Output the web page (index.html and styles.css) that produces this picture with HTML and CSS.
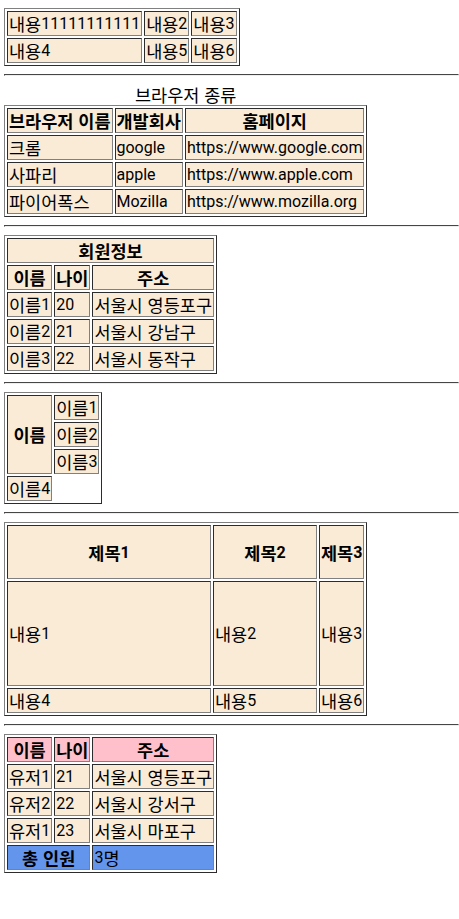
FILE: index.html
```html
<!DOCTYPE html>
<html lang="ko">
<head>
<meta charset="utf-8">
<title>테이블</title>
<link rel="stylesheet" href="styles.css">
</head>
<body>
<table class="tbl">
  <tr><td><span class="ko">내용</span>11111111111</td><td><span class="ko">내용</span>2</td><td><span class="ko">내용</span>3</td></tr>
  <tr><td><span class="ko">내용</span>4</td><td><span class="ko">내용</span>5</td><td><span class="ko">내용</span>6</td></tr>
</table>
<hr class="sep">
<table class="tbl">
  <caption><span class="ko">브라우저 종류</span></caption>
  <tr><th><span class="ko">브라우저 이름</span></th><th><span class="ko">개발회사</span></th><th><span class="ko">홈페이지</span></th></tr>
  <tr><td><span class="ko">크롬</span></td><td>google</td><td>https://www.google.com</td></tr>
  <tr><td><span class="ko">사파리</span></td><td>apple</td><td>https://www.apple.com</td></tr>
  <tr><td><span class="ko">파이어폭스</span></td><td>Mozilla</td><td>https://www.mozilla.org</td></tr>
</table>
<hr class="sep">
<table class="tbl">
  <tr><th colspan="3"><span class="ko">회원정보</span></th></tr>
  <tr><th><span class="ko">이름</span></th><th><span class="ko">나이</span></th><th><span class="ko">주소</span></th></tr>
  <tr><td><span class="ko">이름</span>1</td><td>20</td><td><span class="ko">서울시 영등포구</span></td></tr>
  <tr><td><span class="ko">이름</span>2</td><td>21</td><td><span class="ko">서울시 강남구</span></td></tr>
  <tr><td><span class="ko">이름</span>3</td><td>22</td><td><span class="ko">서울시 동작구</span></td></tr>
</table>
<hr class="sep">
<table class="tbl">
  <tr><th rowspan="3"><span class="ko">이름</span></th><td><span class="ko">이름</span>1</td></tr>
  <tr><td><span class="ko">이름</span>2</td></tr>
  <tr><td><span class="ko">이름</span>3</td></tr>
  <tr><td><span class="ko">이름</span>4</td></tr>
</table>
<hr class="sep">
<table class="tbl">
  <tr class="row-head"><th class="w200"><span class="ko">제목</span>1</th><th class="w100"><span class="ko">제목</span>2</th><th><span class="ko">제목</span>3</th></tr>
  <tr class="row-tall"><td><span class="ko">내용</span>1</td><td><span class="ko">내용</span>2</td><td><span class="ko">내용</span>3</td></tr>
  <tr><td><span class="ko">내용</span>4</td><td><span class="ko">내용</span>5</td><td><span class="ko">내용</span>6</td></tr>
</table>
<hr class="sep">
<table class="tbl">
  <thead class="pink">
    <tr><th><span class="ko">이름</span></th><th><span class="ko">나이</span></th><th><span class="ko">주소</span></th></tr>
  </thead>
  <tbody>
    <tr><td><span class="ko">유저</span>1</td><td>21</td><td><span class="ko">서울시 영등포구</span></td></tr>
    <tr><td><span class="ko">유저</span>2</td><td>22</td><td><span class="ko">서울시 강서구</span></td></tr>
    <tr><td><span class="ko">유저</span>1</td><td>23</td><td><span class="ko">서울시 마포구</span></td></tr>
  </tbody>
  <tfoot class="blue">
    <tr><th colspan="2"><span class="ko">총 인원</span></th><td>3<span class="ko">명</span></td></tr>
  </tfoot>
</table>
</body>
</html>
```
FILE: styles.css
```css
html, body {
  background: #fff;
}
body {
  margin: 8px 0 8px 4px;
  font-family: Roboto, "Noto Sans CJK KR", sans-serif;
  font-size: 16px;
  line-height: 21px;
  color: #000;
}
.ko {
  font-family: "Noto Sans CJK KR", sans-serif;
  font-size: 17.5px;
  line-height: 21px;
  vertical-align: top;
}
.tbl {
  border: 1px outset #808080;
  border-spacing: 2px;
  border-collapse: separate;
}
.tbl td, .tbl th {
  border: 1px inset #808080;
  padding: 1px;
  background: antiquewhite;
}
.tbl th {
  font-weight: bold;
}
.tbl caption {
  text-align: center;
}
.sep {
  margin: 8px 0;
  border: 1px inset #eee;
  border-color: #9a9a9a #eee #eee #9a9a9a;
  height: 0;
}
.w200 { width: 200px; }
.w100 { width: 100px; }
.row-head { height: 54px; }
.row-tall { height: 105px; }
.pink th { background: pink; }
.blue th, .blue td { background: cornflowerblue; }
```
